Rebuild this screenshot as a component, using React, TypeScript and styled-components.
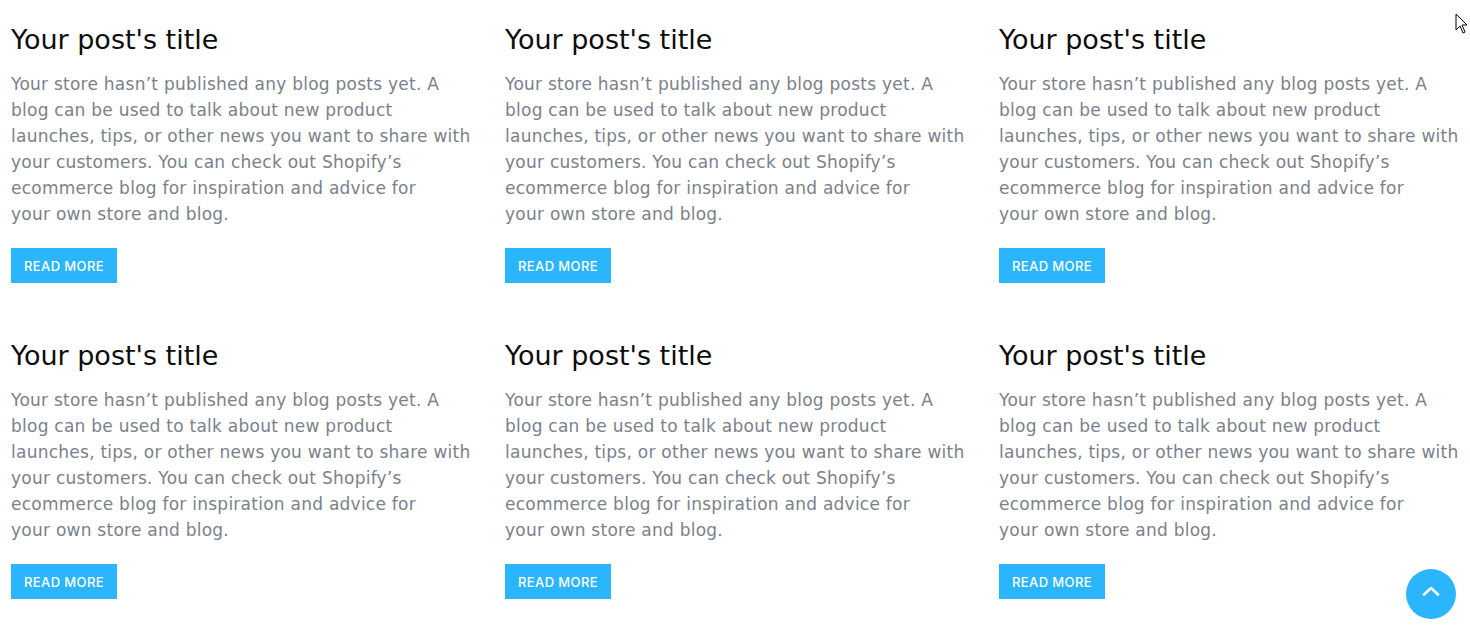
import React from "react";
import styled, { createGlobalStyle } from "styled-components";

const Global = createGlobalStyle`
  html, body { margin: 0; padding: 0; background: #fff; }
  body { font-family: "DejaVu Sans", "Liberation Sans", sans-serif; overflow: hidden; }
`;

const Page = styled.div`
  position: relative;
  width: 1470px;
  height: 626px;
  overflow: hidden;
`;

const Grid = styled.div`
  display: grid;
  grid-template-columns: repeat(3, 470px);
  column-gap: 24px;
  row-gap: 56px;
  padding: 23px 0 0 11px;
`;

const Card = styled.article`
  display: flex;
  flex-direction: column;
  align-items: flex-start;
`;

const Title = styled.h2`
  margin: 0;
  font-family: "DejaVu Sans", sans-serif;
  font-weight: 400;
  font-size: 27px;
  line-height: 34px;
  color: #0d0d0d;
`;

const Body = styled.p`
  margin: 14px 0 0;
  font-size: 17px;
  letter-spacing: 0.25px;
  line-height: 26px;
  color: #7b818b;
  white-space: nowrap;
`;

const Button = styled.a`
  margin-top: 21px;
  display: inline-flex;
  align-items: center;
  justify-content: center;
  width: 106px;
  height: 35px;
  background: #2bb5fd;
  color: #fff;
  font-family: Inter, sans-serif;
  font-size: 13px;
  font-weight: 500;
  letter-spacing: 0.4px;
  text-transform: uppercase;
  text-decoration: none;
`;

const ScrollTop = styled.button`
  position: absolute;
  left: 1406px;
  top: 569px;
  width: 50px;
  height: 50px;
  border-radius: 50%;
  border: none;
  background: #2bb5fd;
  display: flex;
  align-items: center;
  justify-content: center;
  padding: 0 0 6px;
`;

const Cursor = styled.svg`
  position: absolute;
  left: 1455px;
  top: 13px;
`;

const lines = [
  "Your store hasn’t published any blog posts yet. A",
  "blog can be used to talk about new product",
  "launches, tips, or other news you want to share with",
  "your customers. You can check out Shopify’s",
  "ecommerce blog for inspiration and advice for",
  "your own store and blog.",
];

export default function App() {
  return (
    <Page>
      <Global />
      <Grid>
        {Array.from({ length: 6 }).map((_, i) => (
          <Card key={i}>
            <Title>Your post's title</Title>
            <Body>
              {lines.map((l, j) => (
                <React.Fragment key={j}>
                  {l}
                  {j < lines.length - 1 && <br />}
                </React.Fragment>
              ))}
            </Body>
            <Button href="#">Read more</Button>
          </Card>
        ))}
      </Grid>
      <ScrollTop aria-label="Scroll to top">
        <svg width="18" height="10" viewBox="0 0 18 10">
          <path d="M2 8.5 L9 2 L16 8.5" fill="none" stroke="#fff" strokeWidth="2.6" strokeLinecap="round" strokeLinejoin="round" />
        </svg>
      </ScrollTop>
      <Cursor width="14" height="22" viewBox="0 0 14 22">
        <path d="M1 1 L1 17 L5 13 L8 20 L10 19 L7 12 L12 12 Z" fill="#fff" stroke="#000" strokeWidth="1" />
      </Cursor>
    </Page>
  );
}
